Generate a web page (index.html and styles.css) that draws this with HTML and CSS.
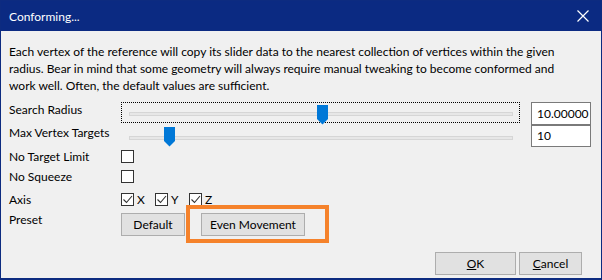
FILE: index.html
```html
<!DOCTYPE html>
<html lang="en">
<head>
    <meta charset="UTF-8">
    <title>Conforming...</title>
    <link rel="stylesheet" href="styles.css">
</head>
<body>
    <div class="window">
        <!-- Barra de titulo -->
        <div class="titlebar">
            <span class="title">Conforming...</span>
            <svg class="close" width="12" height="12" viewBox="0 0 12 12">
                <path d="M0.5 0.5 L11.5 11.5 M11.5 0.5 L0.5 11.5" stroke="#fff" stroke-width="1.2" fill="none"/>
            </svg>
        </div>

        <div class="content">
            <p class="desc">Each vertex of the reference will copy its slider data to the nearest collection of vertices within the given<br>radius. Bear in mind that some geometry will always require manual tweaking to become conformed and<br>work well. Often, the default values are sufficient.</p>

            <div class="form">
                <div class="row row-radius">
                    <span class="label">Search Radius</span>
                    <div class="slider focused">
                        <div class="track"></div>
                        <svg class="thumb" style="left: 195px" width="11" height="20" viewBox="0 0 11 20">
                            <path d="M0 0 H11 V14 L5.5 19.5 L0 14 Z" fill="#0078d7"/>
                        </svg>
                    </div>
                    <div class="field first">10.00000</div>
                </div>
                <div class="row row-targets">
                    <span class="label">Max Vertex Targets</span>
                    <div class="slider">
                        <div class="track"></div>
                        <svg class="thumb" style="left: 42px" width="11" height="20" viewBox="0 0 11 20">
                            <path d="M0 0 H11 V14 L5.5 19.5 L0 14 Z" fill="#0078d7"/>
                        </svg>
                    </div>
                    <div class="field">10</div>
                </div>
                <div class="row row-limit">
                    <span class="label">No Target Limit</span>
                    <span class="check"></span>
                </div>
                <div class="row row-squeeze">
                    <span class="label">No Squeeze</span>
                    <span class="check"></span>
                </div>
                <div class="row row-axis">
                    <span class="label">Axis</span>
                    <div class="axes">
                        <label class="axis"><span class="check checked"><svg width="11" height="11" viewBox="0 0 11 11"><path d="M1.5 5.5 L4.5 8.5 L10 2" stroke="#333" stroke-width="1.1" fill="none"/></svg></span>X</label>
                        <label class="axis"><span class="check checked"><svg width="11" height="11" viewBox="0 0 11 11"><path d="M1.5 5.5 L4.5 8.5 L10 2" stroke="#333" stroke-width="1.1" fill="none"/></svg></span>Y</label>
                        <label class="axis"><span class="check checked"><svg width="11" height="11" viewBox="0 0 11 11"><path d="M1.5 5.5 L4.5 8.5 L10 2" stroke="#333" stroke-width="1.1" fill="none"/></svg></span>Z</label>
                    </div>
                </div>
                <div class="row row-preset">
                    <span class="label">Preset</span>
                    <div class="presets">
                        <button class="btn btn-default">Default</button>
                        <button class="btn btn-even">Even Movement</button>
                    </div>
                </div>
            </div>

            <div class="actions">
                <button class="btn btn-ok"><u>O</u>K</button>
                <button class="btn btn-cancel"><u>C</u>ancel</button>
            </div>
        </div>

        <!-- Marco naranja de resaltado -->
        <div class="highlight"></div>
    </div>
</body>
</html>
```

FILE: styles.css
```css
body {
    margin: 0;
    font-family: Lato, "Noto Sans", sans-serif;
    font-size: 12px;
    color: #000;
    background: #f0f0f0;
}
.window {
    position: relative;
    width: 602px;
    height: 280px;
    box-sizing: border-box;
    border: 1px solid #0d2b80;
    border-bottom-width: 2px;
    background: #f0f0f0;
}
.titlebar {
    height: 30px;
    background: #0b2a82;
    color: #fff;
    display: flex;
    align-items: center;
    justify-content: space-between;
    padding: 0 12px 0 8px;
}
.title {
    font-size: 12px;
}
.content {
    padding: 0 0 0 8px;
}
.desc {
    margin: 12px 0 0 0;
    line-height: 17px;
    height: 51px;
    white-space: nowrap;
}
.form {
    margin-top: 8px;
}
.row {
    display: flex;
    align-items: center;
}
.label {
    width: 112px;
    flex-shrink: 0;
    white-space: nowrap;
}
.row-radius .label,
.row-targets .label {
    align-self: flex-start;
    line-height: 16px;
}
.row-radius { height: 23px; }
.row-targets { height: 22px; }
.row-limit { height: 19px; }
.row-squeeze { height: 21px; }
.row-axis { height: 25px; }
.row-preset {
    height: 23px;
    align-items: flex-start;
}
.row-preset .label {
    line-height: 16px;
}
.slider {
    position: relative;
    width: 399px;
    height: 100%;
    box-sizing: border-box;
    border: 1px dotted transparent;
}
.row-radius .slider {
    height: 21px;
    align-self: flex-start;
}
.slider.focused {
    border-color: #000;
}
.track {
    position: absolute;
    left: 7px;
    right: 6px;
    top: 9px;
    height: 4px;
    box-sizing: border-box;
    background: #e7e7e7;
    border: 1px solid #d6d6d6;
}
.row-targets .track {
    top: 10px;
}
.thumb {
    position: absolute;
    top: 2px;
}
.row-targets .thumb {
    top: 1px;
}
.field {
    margin-left: 11px;
    width: 60px;
    height: 22px;
    box-sizing: border-box;
    background: #fff;
    border: 1px solid #7a7a7a;
    padding: 0 5px;
    line-height: 20px;
    align-self: flex-start;
}
.field.first {
    height: 23px;
    line-height: 21px;
}
.check {
    width: 13px;
    height: 13px;
    box-sizing: border-box;
    background: #fff;
    border: 1px solid #333;
    display: inline-flex;
    align-items: center;
    justify-content: center;
}
.axes {
    display: flex;
}
.axis {
    display: flex;
    align-items: center;
    gap: 3px;
    width: 34px;
}
.presets {
    display: flex;
    gap: 16px;
    padding-top: 1px;
}
.btn {
    font-family: Lato, "Noto Sans", sans-serif;
    font-size: 12px;
    height: 23px;
    box-sizing: border-box;
    background: #e1e1e1;
    border: 1px solid #adadad;
    color: #000;
    padding: 0;
    margin: 0;
}
.btn-default { width: 64px; }
.btn-even { width: 104px; }
.actions {
    display: flex;
    justify-content: flex-end;
    gap: 3px;
    padding-right: 19px;
    margin-top: 17px;
}
.btn-ok { width: 81px; }
.btn-cancel { width: 63px; }
.highlight {
    position: absolute;
    left: 185px;
    top: 204px;
    width: 143px;
    height: 38px;
    box-sizing: border-box;
    border: 4px solid #f5822b;
}
```
